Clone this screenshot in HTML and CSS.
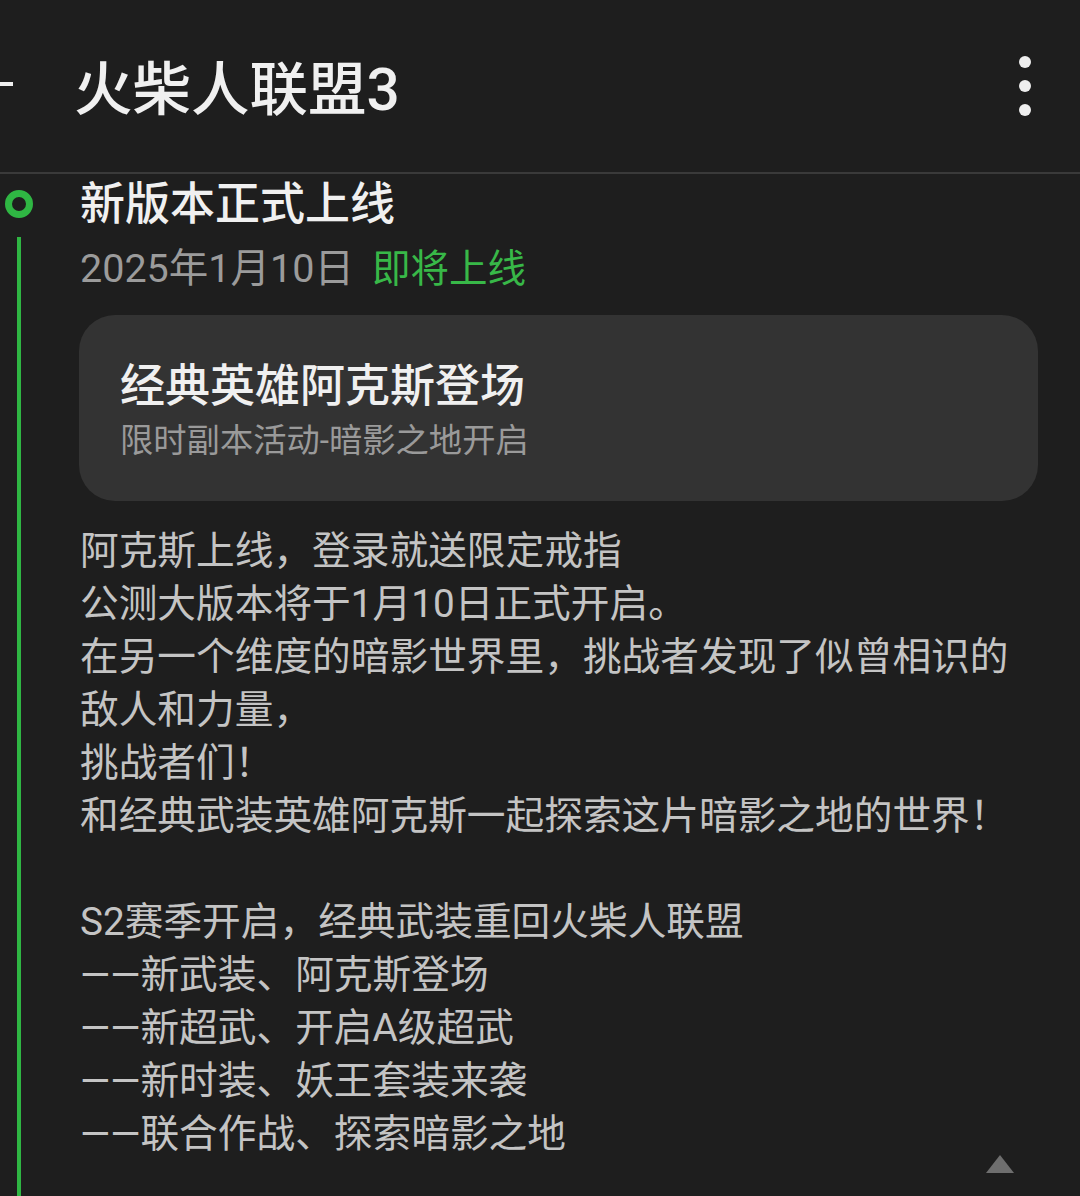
FILE: index.html
```html
<!DOCTYPE html>
<html lang="zh-CN">
<head>
<meta charset="utf-8">
<title>火柴人联盟3</title>
<link rel="stylesheet" href="styles.css">
</head>
<body>
<div class="page">
  <header class="topbar">
    <div class="back"></div>
    <h1 class="title">火柴人联盟3</h1>
    <svg class="more" width="24" height="64" viewBox="0 0 24 64">
      <circle cx="12" cy="8" r="6" fill="#eeeeee"/>
      <circle cx="12" cy="32" r="6" fill="#eeeeee"/>
      <circle cx="12" cy="56" r="6" fill="#eeeeee"/>
    </svg>
  </header>
  <main class="timeline">
    <div class="rail">
      <div class="ring"></div>
      <div class="line"></div>
    </div>
    <div class="content">
      <div class="ev-title">新版本正式上线</div>
      <div class="ev-date">2025年1月10日<span class="status">即将上线</span></div>
      <div class="card">
        <div class="card-title">经典英雄阿克斯登场</div>
        <div class="card-sub">限时副本活动-暗影之地开启</div>
      </div>
      <div class="body">
        <div>阿克斯上线，登录就送限定戒指</div>
        <div>公测大版本将于1月10日正式开启。</div>
        <div>在另一个维度的暗影世界里，挑战者发现了似曾相识的</div>
        <div>敌人和力量，</div>
        <div>挑战者们！</div>
        <div>和经典武装英雄阿克斯一起探索这片暗影之地的世界！</div>
        <div class="blank"></div>
        <div>S2赛季开启，经典武装重回火柴人联盟</div>
        <div>——新武装、阿克斯登场</div>
        <div>——新超武、开启A级超武</div>
        <div>——新时装、妖王套装来袭</div>
        <div>——联合作战、探索暗影之地</div>
      </div>
    </div>
  </main>
  <div class="scrolltop"></div>
</div>
</body>
</html>
```

FILE: styles.css
```css
html, body {
  margin: 0;
  padding: 0;
  background: #1e1e1e;
}
body {
  font-family: Roboto, "Noto Sans CJK SC", "Noto Sans", sans-serif;
  color: #eeeeee;
}
.page {
  position: relative;
  width: 1080px;
  height: 1196px;
  overflow: hidden;
}
.topbar {
  border-bottom: 2px solid #3a3a3a;
  display: flex;
  align-items: center;
  box-sizing: border-box;
  height: 174px;
  padding-bottom: 4px;
}
.back {
  width: 13px;
  height: 4px;
  background: #eeeeee;
}
.title {
  margin: 0 0 0 61px;
  font-size: 58.5px;
  font-weight: 500;
  color: #f0f0f0;
  flex: 1;
}
.more {
  margin-right: 43px;
  margin-top: 4px;
}
.timeline {
  display: flex;
  min-height: 1022px;
}
.rail {
  width: 79px;
  display: flex;
  flex-direction: column;
  align-items: flex-start;
}
.ring {
  width: 28px;
  height: 28px;
  box-sizing: border-box;
  border: 7px solid #2fb643;
  border-radius: 50%;
  margin: 16px 0 0 5px;
}
.line {
  width: 4px;
  background: #2fb643;
  margin: 19px 0 0 17px;
  flex: 1;
}
.content {
  flex: 1;
  padding-right: 42px;
}
.ev-title {
  font-size: 45px;
  line-height: 62px;
  font-weight: 500;
  color: #f0f0f0;
  padding-left: 1px;
}
.ev-date {
  font-size: 39.5px;
  line-height: 66px;
  color: #9b9b9b;
  padding-left: 1px;
}
.status {
  color: #38b848;
  margin-left: 18px;
  font-size: 38.5px;
}
.card {
  margin-top: 13px;
  background: #333333;
  border-radius: 36px;
  padding: 44px 40px 37px 41px;
}
.card-title {
  font-size: 45px;
  line-height: 56px;
  font-weight: 500;
  color: #f0f0f0;
}
.card-sub {
  margin-top: 3px;
  font-size: 33.3px;
  line-height: 46px;
  color: #9a9a9a;
}
.body {
  margin-top: 23px;
  font-size: 38.7px;
  line-height: 53px;
  color: #c4c4c4;
  padding-left: 1px;
}
.blank {
  height: 53px;
}
.scrolltop {
  position: absolute;
  left: 986px;
  top: 1155px;
  width: 0;
  height: 0;
  border-left: 14px solid transparent;
  border-right: 14px solid transparent;
  border-bottom: 18px solid #6e6e6e;
}
```
